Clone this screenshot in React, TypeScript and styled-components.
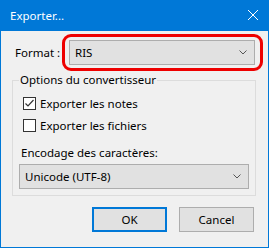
import React from 'react';
import styled, { createGlobalStyle } from 'styled-components';

const GlobalStyle = createGlobalStyle`
  html, body {
    margin: 0;
    padding: 0;
    background: #f0f0f0;
  }
  * {
    box-sizing: border-box;
  }
`;

const Window = styled.div`
  width: 269px;
  height: 248px;
  display: flex;
  flex-direction: column;
  border: 1px solid #0078d7;
  border-top: none;
  background: #f0f0f0;
  font-family: 'Noto Sans', 'Open Sans', sans-serif;
  font-size: 11.5px;
  color: #000;
`;

const TitleBar = styled.div`
  height: 31px;
  flex-shrink: 0;
  display: flex;
  align-items: center;
  justify-content: space-between;
  padding: 0 9px 1px 9px;
  background: #0078d7;
  color: #fff;
  font-size: 11.5px;
`;

const CloseIcon = styled.svg`
  width: 10px;
  height: 10px;
  margin-right: 1px;
`;

const FormatRow = styled.div`
  display: flex;
  align-items: center;
  margin-top: 9px;
  padding: 0 13px 0 14px;
`;

const Label = styled.span`
  flex: 1;
  line-height: 16px;
`;

const Combo = styled.div<{ $width: number; $highlight?: boolean }>`
  position: relative;
  width: ${p => p.$width}px;
  height: 25px;
  flex-shrink: 0;
  display: flex;
  align-items: center;
  justify-content: space-between;
  padding: 0 7px 0 5px;
  background: #e1e1e1;
  border: 1px solid #adadad;

  ${p =>
    p.$highlight &&
    `
    &::after {
      content: '';
      position: absolute;
      inset: -7px -9px -7px -8px;
      border: 3px solid #ee0000;
      border-radius: 9px;
    }
  `}
`;

const Chevron = styled.svg`
  width: 8px;
  height: 5px;
`;

const Group = styled.fieldset`
  margin: 7px 12px 0 11px;
  padding: 0 6px 6px 6px;
  border: 1px solid #dcdcdc;
  min-width: 0;
`;

const Legend = styled.legend`
  padding: 0 1px;
  line-height: 16px;
`;

const CheckRows = styled.div`
  padding-top: 4px;
  display: flex;
  flex-direction: column;
`;

const CheckRow = styled.label`
  display: flex;
  align-items: center;
  height: 22px;
  margin-left: 4px;
  gap: 4px;
`;

const Box = styled.span`
  width: 13px;
  height: 13px;
  flex-shrink: 0;
  display: flex;
  align-items: center;
  justify-content: center;
  background: #fff;
  border: 1px solid #333;
`;

const FieldLabel = styled.div`
  margin: 9px 0 3px 2px;
  line-height: 16px;
`;

const Buttons = styled.div`
  display: flex;
  justify-content: flex-end;
  gap: 12px;
  margin-top: 11px;
  padding-right: 14px;
`;

const Button = styled.button<{ $default?: boolean }>`
  width: 75px;
  height: 25px;
  padding: 0;
  font: inherit;
  color: #000;
  background: #e1e1e1;
  border: ${p => (p.$default ? '2px solid #0078d7' : '1px solid #adadad')};
`;

const ComboChevron = () => (
  <Chevron viewBox="0 0 8 5">
    <path d="M0.5 0.5 L4 4 L7.5 0.5" fill="none" stroke="#555" strokeWidth="1" />
  </Chevron>
);

const Check = ({ checked, children }: { checked?: boolean; children: React.ReactNode }) => (
  <CheckRow>
    <Box>
      {checked && (
        <svg width="11" height="11" viewBox="0 0 11 11">
          <path d="M1.5 5.5 L4 8 L9.5 2" fill="none" stroke="#333" strokeWidth="1.2" />
        </svg>
      )}
    </Box>
    {children}
  </CheckRow>
);

export default function App() {
  return (
    <>
      <GlobalStyle />
      <Window>
        <TitleBar>
          <span>Exporter...</span>
          <CloseIcon viewBox="0 0 10 10">
            <path d="M0 0 L10 10 M10 0 L0 10" stroke="#fff" strokeWidth="1" />
          </CloseIcon>
        </TitleBar>

        <FormatRow>
          <Label>Format :</Label>
          <Combo $width={186} $highlight>
            <span>RIS</span>
            <ComboChevron />
          </Combo>
        </FormatRow>

        <Group>
          <Legend>Options du convertisseur</Legend>
          <CheckRows>
            <Check checked>Exporter les notes</Check>
            <Check>Exporter les fichiers</Check>
          </CheckRows>
          <FieldLabel>Encodage des caractères:</FieldLabel>
          <Combo $width={230}>
            <span>Unicode (UTF-8)</span>
            <ComboChevron />
          </Combo>
        </Group>

        <Buttons>
          <Button $default>OK</Button>
          <Button>Cancel</Button>
        </Buttons>
      </Window>
    </>
  );
}
